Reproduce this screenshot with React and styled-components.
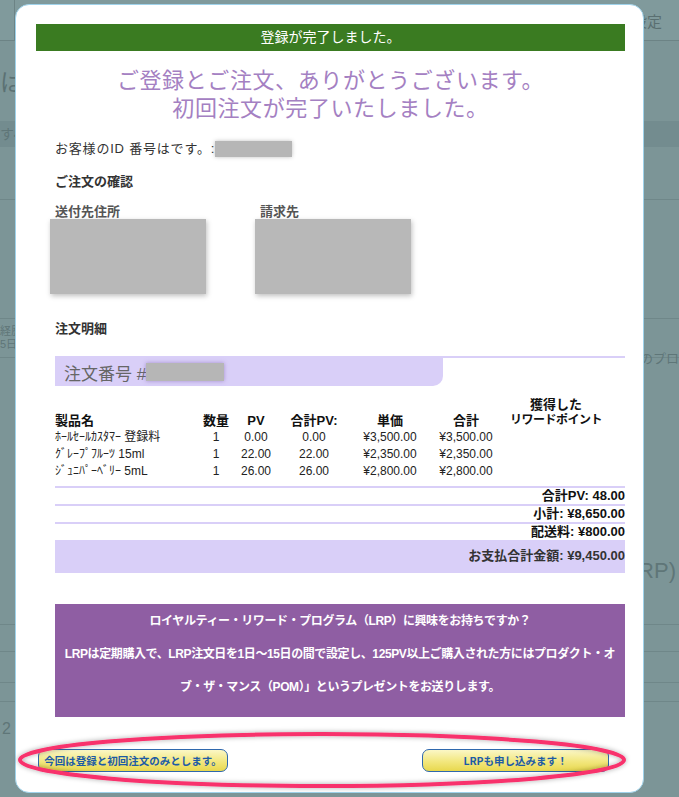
import React from "react";
import styled, { createGlobalStyle } from "styled-components";

const GlobalStyle = createGlobalStyle`
  html, body {
    margin: 0;
    padding: 0;
  }
  body {
    font-family: "Liberation Sans", "Noto Sans CJK JP", sans-serif;
    color: #222;
  }
`;

const items = [
  { name: "ﾎｰﾙｾｰﾙｶｽﾀﾏｰ 登録料", qty: 1, pv: "0.00", tpv: "0.00", unit: "¥3,500.00", total: "¥3,500.00" },
  { name: "ｸﾞﾚｰﾌﾟﾌﾙｰﾂ 15ml", qty: 1, pv: "22.00", tpv: "22.00", unit: "¥2,350.00", total: "¥2,350.00" },
  { name: "ｼﾞｭﾆﾊﾟｰﾍﾞﾘｰ 5mL", qty: 1, pv: "26.00", tpv: "26.00", unit: "¥2,800.00", total: "¥2,800.00" },
];

const totals = [
  { label: "合計PV:", value: "48.00" },
  { label: "小計:", value: "¥8,650.00" },
  { label: "配送料:", value: "¥800.00" },
];

export default function App() {
  return (
    <Page>
      <GlobalStyle />

      {/* page behind the overlay */}
      <BgTop>
        <BgChevron />
        <span>設定</span>
      </BgTop>
      <BgHeading>はじめに</BgHeading>
      <BgBand>すべて</BgBand>
      <BgRule $mt={52} />
      <BgNote>
        <div>
          経歴
          <br />
          5日
        </div>
        <span>のプロ</span>
      </BgNote>
      <BgBig>LRP)</BgBig>
      <BgRule $mt={40} />
      <BgRule $mt={26} />
      <BgRule $mt={30} />
      <BgRule $mt={18} />
      <BgDigit>2</BgDigit>

      {/* modal */}
      <Modal>
        <DoneBar>登録が完了しました。</DoneBar>

        <Title>
          ご登録とご注文、ありがとうございます。
          <br />
          初回注文が完了いたしました。
        </Title>

        <Content>
          <IdLine>
            お客様のID 番号はです。:<Blur $w={77} $h={16} />
          </IdLine>

          <Heading $mt={15}>ご注文の確認</Heading>

          <Addresses>
            <AddressCol>
              <AddressLabel>送付先住所</AddressLabel>
              <AddressBox />
            </AddressCol>
            <AddressCol>
              <AddressLabel>請求先</AddressLabel>
              <AddressBox />
            </AddressCol>
          </Addresses>

          <Heading $mt={26}>注文明細</Heading>

          <OrderBar>
            <OrderTab>
              注文番号 #<Blur $w={78} $h={18} $tint />
            </OrderTab>
          </OrderBar>

          <HeadRow>
            <Cell>製品名</Cell>
            <Cell $center>数量</Cell>
            <Cell $center>PV</Cell>
            <Cell $center>合計PV:</Cell>
            <Cell $center>単価</Cell>
            <Cell $center>合計</Cell>
            <Cell $center>
              獲得した
              <br />
              <Narrow>リワードポイント</Narrow>
            </Cell>
          </HeadRow>

          {items.map((it) => (
            <ItemRow key={it.name}>
              <Cell>{it.name}</Cell>
              <Cell $center>{it.qty}</Cell>
              <Cell $center>{it.pv}</Cell>
              <Cell $center>{it.tpv}</Cell>
              <Cell $center>{it.unit}</Cell>
              <Cell $center>{it.total}</Cell>
              <Cell />
            </ItemRow>
          ))}

          <Totals>
            {totals.map((t) => (
              <TotalRow key={t.label}>
                {t.label} {t.value}
              </TotalRow>
            ))}
            <GrandTotal>お支払合計金額: ¥9,450.00</GrandTotal>
          </Totals>

          <LrpBox>
            <p>ロイヤルティー・リワード・プログラム（LRP）に興味をお持ちですか？</p>
            <p>
              LRPは定期購入で、LRP注文日を1日～15日の間で設定し、125PV以上ご購入された方にはプロダクト・オ
              <br />
              ブ・ザ・マンス（POM）」というプレゼントをお送りします。
            </p>
          </LrpBox>
        </Content>

        <Buttons>
          <YellowButton $w={190}>今回は登録と初回注文のみとします。</YellowButton>
          <YellowButton $w={187}>LRPも申し込みます！</YellowButton>
        </Buttons>

        <Marker viewBox="0 0 620 66" width="620" height="66">
          <defs>
            <filter id="shade" x="-5%" y="-30%" width="110%" height="160%">
              <feDropShadow dx="0" dy="0" stdDeviation="2.5" floodColor="#000" floodOpacity="0.35" />
            </filter>
          </defs>
          <ellipse
            cx="306"
            cy="33"
            rx="302"
            ry="26"
            fill="none"
            stroke="#f8306c"
            strokeWidth="4"
            filter="url(#shade)"
          />
        </Marker>
      </Modal>
    </Page>
  );
}

/* ---------- background page ---------- */

const Page = styled.div`
  position: relative;
  width: 679px;
  height: 797px;
  overflow: hidden;
  background: #7c9597;
  color: #5f7678;
`;

const BgTop = styled.div`
  height: 40px;
  border-bottom: 1px solid #6c8385;
  background: #809a9c;
  display: flex;
  align-items: center;
  justify-content: space-between;
  padding: 0 17px 0 0;
  font-size: 15px;
  color: #5a6f71;
`;

const BgChevron = styled.div`
  width: 14px;
  height: 40px;
  border-right: 1px solid #6c8385;
`;

const BgHeading = styled.div`
  margin-top: 28px;
  font-size: 24px;
  line-height: 28px;
  color: #5b7173;
`;

const BgBand = styled.div`
  margin-top: 24px;
  height: 26px;
  line-height: 26px;
  background: #738c8f;
  font-size: 14px;
`;

const BgRule = styled.div`
  margin-top: ${(p) => p.$mt}px;
  border-top: 1px solid #6f8789;
`;

const BgNote = styled.div`
  margin-top: 118px;
  height: 40px;
  border-top: 1px solid #6f8789;
  border-bottom: 1px solid #6f8789;
  display: flex;
  justify-content: space-between;
  font-size: 11px;
  line-height: 13px;
  padding-top: 6px;
  box-sizing: border-box;

  span {
    align-self: flex-end;
    font-size: 13px;
    margin-bottom: -8px;
  }
`;

const BgBig = styled.div`
  margin-top: 200px;
  padding-right: 3px;
  text-align: right;
  white-space: nowrap;
  font-size: 22px;
`;

const BgDigit = styled.div`
  margin-top: 18px;
  padding-left: 2px;
  font-size: 16px;
`;

/* ---------- modal ---------- */

const Modal = styled.div`
  position: absolute;
  left: 15px;
  top: 4px;
  width: 629px;
  height: 789px;
  box-sizing: border-box;
  background: #fff;
  border: 1px solid #9fd2ea;
  border-radius: 14px;
  padding: 19px 18px 0 20px;
`;

const DoneBar = styled.div`
  height: 27px;
  line-height: 27px;
  background: #3a7b21;
  color: #fff;
  text-align: center;
  font-size: 14px;
`;

const Title = styled.h1`
  margin: 16px 0 0;
  text-align: center;
  font-size: 22px;
  line-height: 28px;
  letter-spacing: 0.6px;
  font-weight: normal;
  color: #a480c2;
`;

const Content = styled.div`
  margin-left: 19px;
`;

const IdLine = styled.div`
  margin-top: 17px;
  display: flex;
  align-items: center;
  font-size: 13px;
  line-height: 18px;
  letter-spacing: 0.8px;
  color: #333;
`;

const Blur = styled.span`
  display: inline-block;
  width: ${(p) => p.$w}px;
  height: ${(p) => p.$h}px;
  background: #b6b6b6;
  filter: blur(0.7px);
  box-shadow: 0 0 4px ${(p) => (p.$tint ? "rgba(120, 90, 170, 0.55)" : "rgba(0, 0, 0, 0.25)")};
`;

const Heading = styled.div`
  margin-top: ${(p) => p.$mt}px;
  font-size: 13px;
  line-height: 18px;
  font-weight: bold;
  color: #333;
`;

const Addresses = styled.div`
  margin-top: 13px;
  display: grid;
  grid-template-columns: 205px 205px;
`;

const AddressCol = styled.div`
  display: flex;
  flex-direction: column;
`;

const AddressLabel = styled.div`
  font-size: 13px;
  line-height: 15px;
  font-weight: bold;
  color: #555;
`;

const AddressBox = styled.div`
  margin-left: -5px;
  width: 156px;
  height: 75px;
  background: #b8b8b8;
  filter: blur(0.6px);
  box-shadow: 1px 2px 5px rgba(0, 0, 0, 0.25);
`;

const OrderBar = styled.div`
  margin-top: 18px;
  border-top: 2px solid #d9cff8;
`;

const OrderTab = styled.div`
  width: 388px;
  height: 28px;
  box-sizing: border-box;
  background: #d9cff8;
  border-bottom-right-radius: 10px;
  display: flex;
  align-items: center;
  padding-left: 9px;
  font-size: 17px;
  color: #666;
`;

const gridCols = "141px 40px 40px 76px 76px 76px 104px";

const HeadRow = styled.div`
  margin-top: 11px;
  display: grid;
  grid-template-columns: ${gridCols};
  align-items: end;
  height: 32px;
  font-size: 13px;
  line-height: 15px;
  font-weight: bold;
  color: #111;
`;

const ItemRow = styled.div`
  display: grid;
  grid-template-columns: ${gridCols};
  font-size: 12px;
  line-height: 16px;
  color: #222;
`;

const Cell = styled.div`
  text-align: ${(p) => (p.$center ? "center" : "left")};
  white-space: nowrap;
  padding-bottom: 1px;
`;

const Narrow = styled.span`
  font-size: 12px;
  letter-spacing: -0.5px;
`;

const Totals = styled.div`
  margin-top: 6px;
`;

const TotalRow = styled.div`
  border-top: 2px solid #d9cff8;
  height: 16px;
  line-height: 15px;
  text-align: right;
  font-size: 13px;
  font-weight: bold;
  color: #111;
`;

const GrandTotal = styled.div`
  height: 33px;
  line-height: 32px;
  background: #d9cff8;
  text-align: right;
  font-size: 13px;
  font-weight: bold;
  color: #333;
`;

const LrpBox = styled.div`
  margin-top: 31px;
  height: 113px;
  box-sizing: border-box;
  padding: 1px 0 12px;
  background: #8f5ea3;
  color: #fff;
  text-align: center;
  font-size: 12px;
  line-height: 33px;
  font-weight: bold;
  white-space: nowrap;
  letter-spacing: -0.4px;

  p {
    margin: 0;
  }
`;

const Buttons = styled.div`
  margin-top: 32px;
  display: flex;
  justify-content: space-between;
  padding: 0 16px 0 2px;
`;

const YellowButton = styled.button`
  width: ${(p) => p.$w}px;
  height: 23px;
  padding: 0;
  border: 1px solid #2f68ad;
  border-radius: 7px;
  background: linear-gradient(#fbf7c6, #f2e77e 55%, #e8d84e);
  color: #1d5ba6;
  font-family: "Noto Sans CJK JP", sans-serif;
  font-size: 10.5px;
  font-weight: bold;
  white-space: nowrap;
  cursor: pointer;
`;

const Marker = styled.svg`
  position: absolute;
  left: 0;
  top: 722px;
  pointer-events: none;
  overflow: visible;
`;
